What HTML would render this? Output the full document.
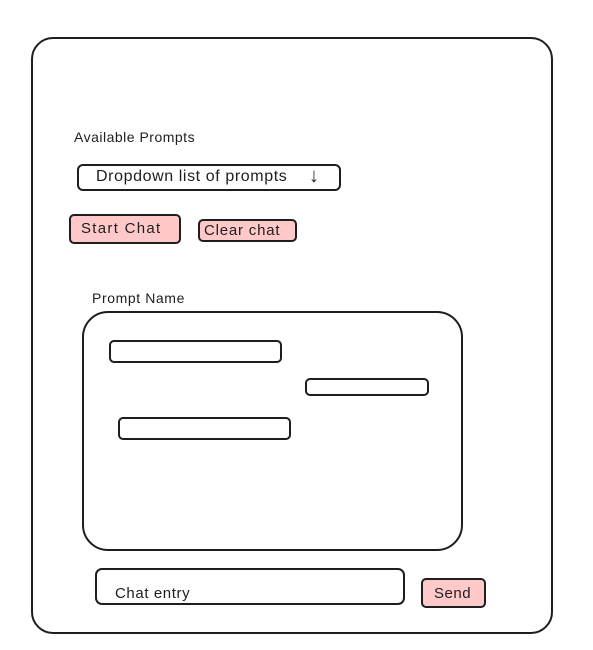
<!DOCTYPE html>
<html><head><style>
body{margin:0;width:593px;height:650px;background:#fff;position:relative;overflow:hidden;font-family:"Comic Sans MS","Liberation Sans",sans-serif;color:#1e1e1e}
.b{position:absolute;border:2px solid #1e1e1e;box-sizing:border-box}
.t{position:absolute;white-space:nowrap;font-size:15px;line-height:1}
.p{background:#ffc9c9}
</style></head><body>
<div class="b" style="left:31px;top:37px;width:522px;height:597px;border-radius:22px"></div>
<div class="t" style="left:74px;top:130px;font-size:14px;letter-spacing:0.5px">Available Prompts</div>
<div class="b" style="left:77px;top:164px;width:264px;height:27px;border-radius:6px"></div>
<div class="t" style="left:96px;top:169px;font-size:16px;letter-spacing:0.6px">Dropdown list of prompts</div>
<div class="t" style="left:309px;top:166px;font-size:20px">↓</div>
<div class="b p" style="left:69px;top:214px;width:112px;height:30px;border-radius:5px"></div>
<div class="t" style="left:81px;top:221px;font-size:15px;letter-spacing:1.3px">Start Chat</div>
<div class="b p" style="left:198px;top:219px;width:99px;height:23px;border-radius:5px"></div>
<div class="t" style="left:204px;top:223px;font-size:15px;letter-spacing:0.8px">Clear chat</div>
<div class="t" style="left:92px;top:291px;font-size:14px;letter-spacing:0.6px">Prompt Name</div>
<div class="b" style="left:82px;top:311px;width:381px;height:240px;border-radius:26px"></div>
<div class="b" style="left:109px;top:340px;width:173px;height:23px;border-radius:5px"></div>
<div class="b" style="left:305px;top:378px;width:124px;height:18px;border-radius:5px"></div>
<div class="b" style="left:118px;top:417px;width:173px;height:23px;border-radius:5px"></div>
<div class="b" style="left:95px;top:568px;width:310px;height:37px;border-radius:7px"></div>
<div class="t" style="left:115px;top:586px;font-size:15px;letter-spacing:0.6px">Chat entry</div>
<div class="b p" style="left:421px;top:578px;width:65px;height:30px;border-radius:5px"></div>
<div class="t" style="left:434px;top:586px;font-size:15px;letter-spacing:0.5px">Send</div>
</body></html>
